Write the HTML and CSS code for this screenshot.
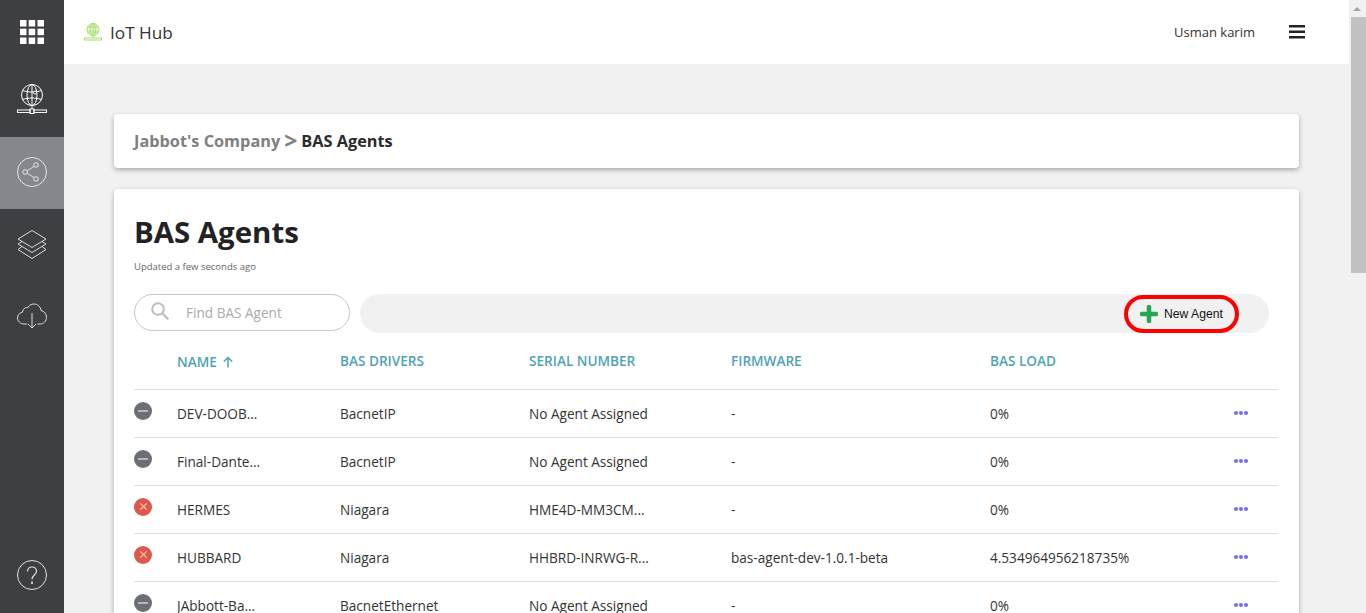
FILE: index.html
```html
<!DOCTYPE html>
<html lang="en">
<head>
<meta charset="utf-8">
<title>BAS Agents</title>
<link rel="stylesheet" href="styles.css">
</head>
<body>
<div class="app">
  <nav class="sidebar">
    <div class="nav-item nav-apps">
      <svg width="24" height="24" viewBox="0 0 24 24"><g fill="#fff"><rect width="6.500" height="6.500"/><rect x="8.700" width="6.500" height="6.500"/><rect x="17.500" width="6.500" height="6.500"/><rect y="8.700" width="6.500" height="6.500"/><rect x="8.700" y="8.700" width="6.500" height="6.500"/><rect x="17.500" y="8.700" width="6.500" height="6.500"/><rect y="17.500" width="6.500" height="6.500"/><rect x="8.700" y="17.500" width="6.500" height="6.500"/><rect x="17.500" y="17.500" width="6.500" height="6.500"/></g></svg>
    </div>
    <div class="nav-item nav-globe">
      <svg width="32" height="32" viewBox="0 0 32 32" fill="none" stroke="#fff" stroke-width="1"><circle cx="16" cy="12" r="10.500"/><ellipse cx="16" cy="12" rx="5" ry="10.500"/><path d="M16 1.500v21M6.500 7.500c6 2 13 2 19 0M6.500 16.500c6-2 13-2 19 0"/><circle cx="19" cy="9.500" r="1.500" fill="#3e3f43"/><path d="M16 22.500v4"/><rect x="14" y="26" width="4" height="4.500" fill="#3e3f43"/><rect x="1.500" y="27" width="12.500" height="2.500"/><rect x="18" y="27" width="12.500" height="2.500"/></svg>
    </div>
    <div class="nav-item nav-active">
      <svg width="32" height="32" viewBox="0 0 32 32" fill="none" stroke="#e4e4e6" stroke-width="1"><circle cx="16" cy="16" r="14.500"/><circle cx="20" cy="9" r="2.300"/><circle cx="9" cy="16" r="2.300"/><circle cx="20" cy="23" r="2.300"/><path d="M11 15l7-4.700M11 17l7 4.700"/></svg>
    </div>
    <div class="nav-item">
      <svg width="32" height="32" viewBox="0 0 32 32" fill="none" stroke="#dcdcdc" stroke-width="1"><path d="M16 1.500l14 8.500-14 8.500-14-8.500z"/><path d="M6 12.500l-4 2.500 14 8.500 14-8.500-4-2.500"/><path d="M6 17.500l-4 3 14 9 14-9-4-3"/></svg>
    </div>
    <div class="nav-item nav-cloud">
      <svg width="32" height="32" viewBox="0 0 32 32" fill="none" stroke="#dcdcdc" stroke-width="1"><path d="M11 25H8c-3.500 0-6.500-2.800-6.500-6 0-3 2.300-5.400 5-5.800C7 9.800 9.300 8 11.500 8.800 13 6.200 15.500 5 18 5c3.500 0 6.500 2.500 7 6.500 3 .5 5.500 3.300 5.500 6.800 0 3.700-3 6.700-6 6.700h-3"/><path d="M16 14v15M12 25l4 4 4-4"/></svg>
    </div>
    <div class="nav-item nav-help">
      <svg width="32" height="32" viewBox="0 0 32 32" fill="none" stroke="#e4e4e6" stroke-width="1"><circle cx="16" cy="16" r="14.500"/><path d="M11.500 12.500c0-2.800 2-4.500 4.500-4.500s4.500 1.700 4.500 4.200c0 3.800-4.500 3.800-4.500 8" stroke-width="1.200"/><path d="M16 22.500v2.500" stroke-width="1.600"/></svg>
    </div>
  </nav>

  <div class="content">
    <header class="topbar">
      <div class="brand">
        <svg width="18" height="18" viewBox="0 0 18 18" fill="none" stroke="#a5e06c" stroke-width="1"><circle cx="9" cy="6.500" r="6" fill="#e6f7d5"/><ellipse cx="9" cy="6.500" rx="2.800" ry="6"/><path d="M9 .5v12M3.500 4h11M3.500 9h11M9 12.500v3"/><rect x=".5" y="15" width="17" height="2"/></svg>
        <span>IoT Hub</span>
      </div>
      <div class="user">
        <span>Usman karim</span>
        <svg class="menu-icon" width="16" height="14" viewBox="0 0 16 14"><g fill="#222"><rect y="0" width="16" height="2.500"/><rect y="5.500" width="16" height="2.500"/><rect y="11" width="16" height="2.500"/></g></svg>
      </div>
    </header>

    <main class="main">
      <section class="card crumbs">
        <span class="crumb-parent">Jabbot's Company</span>
        <span class="crumb-sep">&gt;</span>
        <span class="crumb-current">BAS Agents</span>
      </section>

      <section class="card panel">
        <h1>BAS Agents</h1>
        <p class="updated">Updated a few seconds ago</p>

        <div class="toolbar">
          <label class="search">
            <svg width="18" height="18" viewBox="0 0 18 18" fill="none" stroke="#bdbdbd" stroke-width="2"><circle cx="7" cy="7" r="5.800"/><path d="M11.500 11.500l5.800 5.800"/></svg>
            <span>Find BAS Agent</span>
          </label>
          <div class="actions">
            <button class="new-agent" type="button">
              <svg width="18" height="18" viewBox="0 0 18 18"><path d="M9 2v14M2 9h14" stroke="#27a54f" stroke-width="4.500" stroke-linecap="round"/></svg>
              <span>New Agent</span>
            </button>
          </div>
        </div>

        <div class="table">
          <div class="row head">
            <span></span>
            <span class="sorted">NAME <svg width="12" height="12" viewBox="0 0 12 12" fill="none" stroke="#4fa3b8" stroke-width="1.500"><path d="M6 11.500V1.500M1.800 5.500L6 1.500l4.200 4"/></svg></span>
            <span>BAS DRIVERS</span>
            <span>SERIAL NUMBER</span>
            <span>FIRMWARE</span>
            <span>BAS LOAD</span>
            <span></span>
          </div>

          <div class="row">
            <span class="status status-off"></span>
            <span>DEV-DOOB...</span><span>BacnetIP</span><span>No Agent Assigned</span><span>-</span><span>0%</span>
            <span class="more"><i></i><i></i><i></i></span>
          </div>
          <div class="row">
            <span class="status status-off"></span>
            <span>Final-Dante...</span><span>BacnetIP</span><span>No Agent Assigned</span><span>-</span><span>0%</span>
            <span class="more"><i></i><i></i><i></i></span>
          </div>
          <div class="row">
            <span class="status status-err"></span>
            <span>HERMES</span><span>Niagara</span><span>HME4D-MM3CM...</span><span>-</span><span>0%</span>
            <span class="more"><i></i><i></i><i></i></span>
          </div>
          <div class="row">
            <span class="status status-err"></span>
            <span>HUBBARD</span><span>Niagara</span><span>HHBRD-INRWG-R...</span><span>bas-agent-dev-1.0.1-beta</span><span>4.534964956218735%</span>
            <span class="more"><i></i><i></i><i></i></span>
          </div>
          <div class="row">
            <span class="status status-off"></span>
            <span>JAbbott-Ba...</span><span>BacnetEthernet</span><span>No Agent Assigned</span><span>-</span><span>0%</span>
            <span class="more"><i></i><i></i><i></i></span>
          </div>
        </div>
      </section>
    </main>
  </div>

  <div class="scrollbar">
    <div class="scroll-up"></div>
    <div class="scroll-thumb"></div>
  </div>
</div>
</body>
</html>
```

FILE: styles.css
```css
* { box-sizing: border-box; }
html, body { margin: 0; height: 100%; overflow: hidden; }
body { font-family: "Open Sans", "Liberation Sans", sans-serif; font-size: 13.600px; color: #333; background: #f1f1f1; }

.app { display: grid; grid-template-columns: 64px 1fr 17px; height: 613px; overflow: hidden; }

.sidebar { background: #3e3f43; display: flex; flex-direction: column; height: 613px; }
.nav-item { height: 72px; display: flex; align-items: center; justify-content: center; }
.nav-apps { height: 65px; padding-bottom: 1px; }
.nav-globe { padding-bottom: 5px; }
.nav-active { background: #85878d; padding-bottom: 2px; }
.nav-cloud { padding-bottom: 5px; }
.nav-help { margin-top: auto; height: 76px; }

.content { min-width: 0; display: flex; flex-direction: column; height: 613px; overflow: hidden; }

.topbar { height: 64px; flex: none; background: #fff; display: flex; align-items: center; justify-content: space-between; padding: 0 44px 0 20px; }
.brand { display: flex; align-items: center; gap: 8px; font-size: 17.200px; color: #333; }
.user { display: flex; align-items: center; gap: 34px; font-size: 13px; color: #333; }

.main { padding: 50px 50px 0; display: flex; flex-direction: column; gap: 21px; }
.card { background: #fff; border-radius: 4px; box-shadow: 0 2px 5px rgba(0, 0, 0, 0.3); }

.crumbs { height: 54px; display: flex; align-items: center; gap: 4px; padding: 0 20px; font-size: 16.300px; font-weight: 700; }
.crumb-parent { color: #808080; }
.crumb-sep { color: #808080; font-size: 23px; line-height: 1; margin-top: -1px; }
.crumb-current { color: #2b2b2b; }

.panel { padding: 20px; height: 500px; }
h1 { margin: 0; font-size: 29.400px; line-height: 46px; font-weight: 700; color: #222; }
.updated { margin: 5px 0 0; font-size: 9.500px; line-height: 14px; color: #666; }

.toolbar { display: flex; gap: 10px; margin-top: 20px; height: 39px; }
.search { width: 216px; height: 37px; border: 1px solid #c8c8c8; border-radius: 19px; display: flex; align-items: center; gap: 17px; padding: 0 0 0 16px; color: #aaa; font-size: 13.600px; }
.search svg { margin-top: -3px; }
.actions { flex: 1; margin-right: 10px; background: #f1f1f1; border-radius: 20px; display: flex; align-items: center; justify-content: flex-end; padding-right: 30px; }
.new-agent { width: 115px; height: 38px; border: 4px solid #f00; border-radius: 19px; background: none; padding: 0 0 0 12px; display: flex; align-items: center; gap: 6px; font-family: "Liberation Sans", Arial, sans-serif; font-size: 12.200px; color: #111; }

.row { display: grid; grid-template-columns: 43px 163px 189px 202px 259px 244px 45px; align-items: center; height: 48px; border-bottom: 1px solid #e0e0e0; color: #333; font-size: 13.600px; }
.head { height: 57px; font-weight: 600; font-size: 13.600px; color: #4fa3b8; padding-bottom: 1px; }
.sorted { display: flex; align-items: center; gap: 5px; padding-top: 2px; }

.status { position: relative; width: 18px; height: 18px; border-radius: 50%; margin-top: -6px; display: block; }
.status-off { background: #6b6e73; }
.status-off::after { content: ""; position: absolute; left: 4px; right: 4px; top: 8px; height: 2px; background: #b5b7ba; }
.status-err { background: #dd5a4b; }
.status-err::before, .status-err::after { content: ""; position: absolute; left: 4.500px; right: 4.500px; top: 8.500px; height: 1px; background: #f3cfc9; transform: rotate(45deg); }
.status-err::after { transform: rotate(-45deg); }

.more { display: flex; gap: 1px; margin-top: -1px; }
.more i { width: 4px; height: 4px; border-radius: 50%; background: #6a6ef5; }

.scrollbar { background: #f1f1f1; display: flex; flex-direction: column; height: 613px; padding-left: 2px; }
.scroll-up { height: 17px; flex: none; position: relative; }
.scroll-up::after { content: ""; position: absolute; left: 2px; top: 7px; border: 4px solid transparent; border-top: 0; border-bottom: 4px solid #a3a3a3; }
.scroll-thumb { height: 256px; background: #c1c1c1; }
```
